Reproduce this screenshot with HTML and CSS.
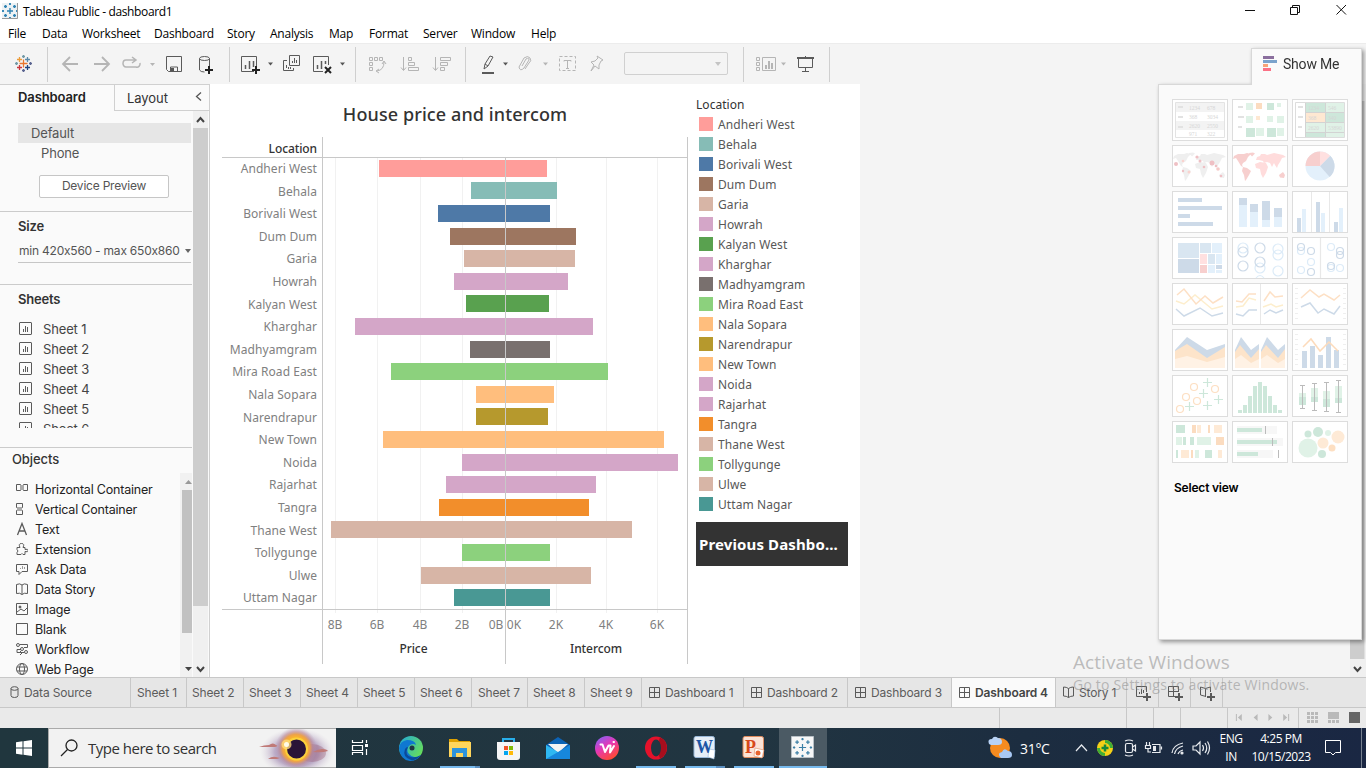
FILE: index.html
```html
<!DOCTYPE html>
<html lang="en">
<head>
<meta charset="utf-8">
<title>Tableau Public - dashboard1</title>
<link rel="stylesheet" href="styles.css">
</head>
<body>
<svg width="0" height="0" class="defs">
  <defs>
    <g id="plus9"><path d="M-4 0H4M0-4V4" stroke-width="2"/></g>
    <g id="sheet"><rect x=".5" y=".5" width="12" height="12" rx=".5"/><path d="M4.5 10V7M6.500 10V4M8.500 10V5"/></g>
    <g id="dash"><path d="M.5.5h10v10H.5zM5.5.5v10M.5 5.500h10"/></g>
    <g id="book"><path d="M.5 1Q3.500 1 5.500 2.500Q7.500 1 10.500 1V10Q7.500 10 5.500 11.500Q3.500 10 .5 10zM5.500 2.500V11.500"/></g>
    <g id="crosses"><path d="M-3 0H3M0-3V3"/><path d="M-6-4.500h3M-4.500-6v3M3-4.500h3M4.500-6v3M-6 4.500h3M-4.500 3v3M3 4.500h3M4.500 3v3M-1-7h2M0-8v2M-1 7h2M0 6v2M-8 0h2M-7-1v2M6 0h2M7-1v2"/></g>
  </defs>
</svg>
<div class="app">
  <header class="titlebar">
    <svg width="16" height="16" viewBox="-8 -8 16 16"><rect x="-8" y="-8" width="16" height="16" fill="#eef2f4"/><use href="#crosses" stroke="#2f83b3" fill="none" stroke-width="1.400"/><path d="M-8 7.500H7.500V-8" stroke="#999" fill="none"/></svg>
    <span class="title">Tableau Public - dashboard1</span>
    <svg class="winctl" width="126" height="22" viewBox="1240 0 126 22" fill="none" stroke="#111"><path d="M1245 10.500h10"/><path d="M1290.500 7.500h7v7h-7zM1292.500 7V5.500h7v7H1298"/><path d="M1336.500 5l9.500 9.500M1346 5l-9.500 9.500"/></svg>
  </header>
  <nav class="menubar"><span>File</span><span>Data</span><span>Worksheet</span><span>Dashboard</span><span>Story</span><span>Analysis</span><span>Map</span><span>Format</span><span>Server</span><span>Window</span><span>Help</span></nav>

  <div class="toolbar">
    <svg class="tool" width="47" height="41" viewBox="0 43 47 41" fill="none" stroke-width="1.300"><path stroke="#e8762c" d="M19.500 63.500h8M23.500 59.500v8"/><path stroke="#eb9c3a" d="M17 59.500h5M19.500 57v5"/><path stroke="#5c8aa8" d="M25 59.500h5M27.500 57v5"/><path stroke="#c8373f" d="M17 67.500h5M19.500 65v5"/><path stroke="#1f447e" d="M25 67.500h5M27.500 65v5"/><path stroke="#7199a6" d="M15 63.500h3M16.500 62v3M22 56.500h3M23.500 55v3"/><path stroke="#5b6591" d="M29 63.500h3M30.500 62v3M22 70.500h3M23.500 69v3"/></svg>
    <i class="sep"></i>
    <svg class="tool dim" width="181" height="41" viewBox="48 43 181 41"><path stroke-width="1.800" d="M78 64H63M70 57l-7 7 7 7M94 64h15M102 57l7 7-7 7"/><path stroke-width="1.500" d="M136 60h-10a3 3.500 0 0 0 0 7h10a3 3.500 0 0 0 4-4M132 57l4 3-4 3"/><path class="caret" d="M150 63h5l-2.500 3z"/><g class="dark"><path d="M166.500 56.500h15v15h-13l-2-2zM170.500 71.500v-4.500h7v4.500"/><path fill="#555" stroke="none" d="M171 68h3v3h-3z"/><ellipse cx="204.500" cy="58.500" rx="5" ry="2"/><path d="M199.500 58.500V70q1 2 5 2M209.500 58.500V66"/></g><use href="#plus9" x="209" y="70" stroke="#222"/></svg>
    <i class="sep"></i>
    <svg class="tool dark" width="125" height="41" viewBox="230 43 125 41"><path d="M254 71.500H241.500v-15h15V66"/><path stroke-width="1.500" d="M245.500 69v-4M249.500 69v-8M253.500 67v-6"/><use href="#plus9" x="256" y="70" stroke="#222"/><path class="caret" d="M268 62.500h5l-2.500 3z"/><path d="M289.500 55.500h10v10h-10zM292.500 63v-2M294.500 63v-5M296.500 63v-3M287 60.500h-3.500v10h10V68M286.500 68v-3M288.500 69v-2M290.500 69v-2"/><path d="M323 71.500H313.500v-15h15V65"/><path stroke-width="1.500" d="M317.500 69v-4M321.500 69v-8M325.500 64v-3"/><path stroke="#222" stroke-width="2" d="M325 67l6 6M331 67l-6 6"/><path class="caret" d="M340 62.500h5l-2.500 3z"/></svg>
    <i class="sep"></i>
    <svg class="tool dim" width="109" height="41" viewBox="356 43 109 41"><path d="M369.500 57.500h3v3h-3zM374.500 57.500h3v3h-3zM379.500 57.500h3v3h-3zM369.500 62.500h3v3h-3zM369.500 67.500h3v3h-3zM377 71q7-1 7-9M382 64l2-3 2 3M379 69l-3 2 3 2"/><path d="M403.500 57v13M401 67.500l2.500 3 2.500-3M408.500 57.500h3v3h-3zM408.500 62.500h6v3h-6zM408.500 67.500h10v3h-10zM435.500 57v13M433 67.500l2.500 3 2.500-3M440.500 57.500h10v3h-10zM440.500 62.500h7v3h-7zM440.500 67.500h4v3h-4z"/></svg>
    <i class="sep"></i>
    <svg class="tool dim" width="152" height="41" viewBox="466 43 152 41"><g class="dark"><path d="M484 69l1-5 5-8 3 1-5 9-4 3zM485 64l3 2"/><path stroke-width="2" d="M482 73h12"/><path class="caret" d="M503 62.500h5l-2.500 3z"/></g><path d="M522 66l4-7q3-2 3 1l-5 8q-4 4-5-1l5-9q4-3 6 0t-1 5l-4 6"/><path class="caret" d="M543 62.500h5l-2.500 3z"/><path stroke-dasharray="3 2" d="M559.500 56.500h16v14h-16z"/><path d="M564 61.500V60.500h7v1M567.500 60.500v8M566 68.500h3"/><path d="M597 56l6 4-2 1-2 4 0 4-4-3-4 5 3-6-3-3 4-1 3-3z"/></svg>
    <div class="fitbox"><i></i></div>
    <i class="sep s2"></i>
    <svg class="tool dim" width="85" height="41" viewBox="744 43 85 41"><path d="M756.500 57.500h3v3h-3zM756.500 62.500h3v3h-3zM756.500 67.500h3v3h-3zM762.500 57.500h13v13h-13z"/><path stroke-width="2" d="M766 69v-4M769 69v-8M772 69v-6"/><path class="caret" d="M781 62.500h5l-2.500 3z"/><g class="dark"><path stroke-width="2" d="M797 58h17"/><path d="M805.500 56v2M798.500 58v9.500h14V58M805.500 68v4M802 71.500h7"/></g></svg>
    <i class="sep"></i>
  </div>

  <main class="work">
    <aside class="side">
      <div class="sidetabs"><b>Dashboard</b><span>Layout<svg width="8" height="11" viewBox="0 0 8 11" fill="none" stroke="#555" stroke-width="1.300"><path d="M6 .5L1.500 4.500 6 8.500"/></svg></span></div>
      <div class="sidebody">
        <div class="panes">
          <section class="devices"><div class="default">Default</div><div class="phone">Phone</div><div class="preview">Device Preview</div></section>
          <section class="size"><h3>Size</h3><div class="drop">min 420x560 - max 650x860<i></i></div></section>
          <section class="sheets"><h3>Sheets</h3>
            <ul>
              <li><svg class="ic" width="13" height="13"><use href="#sheet"/></svg>Sheet 1</li>
              <li><svg class="ic" width="13" height="13"><use href="#sheet"/></svg>Sheet 2</li>
              <li><svg class="ic" width="13" height="13"><use href="#sheet"/></svg>Sheet 3</li>
              <li><svg class="ic" width="13" height="13"><use href="#sheet"/></svg>Sheet 4</li>
              <li><svg class="ic" width="13" height="13"><use href="#sheet"/></svg>Sheet 5</li>
              <li><svg class="ic" width="13" height="13"><use href="#sheet"/></svg>Sheet 6</li>
            </ul>
          </section>
          <section class="objects">
            <div class="objmain"><h3>Objects</h3>
            <ul>
              <li><svg class="ic" width="12" height="14"><path d="M.5 2.500h4v6h-4zM7.500 2.500h4v6h-4z"/><path fill="#aaa" stroke="none" d="M4 3h4v5H4z"/></svg>Horizontal Container</li>
              <li><svg class="ic" width="12" height="14"><path d="M.5 1.500h6v4h-6zM.5 8.500h6v4h-6z"/><path fill="#aaa" stroke="none" d="M1 5h5v4H1z"/></svg>Vertical Container</li>
              <li><svg class="ic" width="12" height="14"><path stroke-width="1.300" d="M1.500 13L6 1.500 10.500 13M3 9h6"/></svg>Text</li>
              <li><svg class="ic" width="12" height="14"><path d="M1 5.500h3q-2-4 1.500-4t1.500 4h2v2q3-1 3 1t-3 1v3H7q-1-2-2 0H1v-2q2-1.500 0-3z"/></svg>Extension</li>
              <li><svg class="ic" width="12" height="14"><path d="M.5 2.500h11v7H6l-3 3v-3H.5z"/><path stroke="#999" d="M4.500 7V6M6.500 7V4M8.500 7V5"/></svg>Ask Data</li>
              <li><svg class="ic" width="12" height="14"><path d="M.5 2.500Q4 1 6 3q2-2 5.500-.5v9Q8 10.500 6 12.500 4 10.500.5 11.500zM6 3v9.500"/></svg>Data Story</li>
              <li><svg class="ic" width="12" height="14"><path d="M.5 1.500h11v11H.5zM1 10l4-3 3 2 3-3"/><circle cx="4" cy="5" r="1" fill="#555"/></svg>Image</li>
              <li><svg class="ic" width="12" height="14"><path d="M.5 1.500h11v11H.5z"/></svg>Blank</li>
              <li><svg class="ic" width="12" height="14"><circle cx="2" cy="3" r="1.500"/><circle cx="6" cy="7" r="1.500"/><circle cx="10" cy="10" r="1.500"/><path d="M4 2.500h7.500v3H8M5 7.500H1v3h7M4 9l2 2-2 2"/></svg>Workflow</li>
              <li><svg class="ic" width="12" height="14"><circle cx="6" cy="7" r="5.500"/><ellipse cx="6" cy="7" rx="2.500" ry="5.500"/><path d="M1 5h10M1 9h10"/></svg>Web Page</li>
            </ul></div>
            <svg class="objscroll" width="12" height="204" viewBox="180 473 12 204"><path fill="#f1f1f1" d="M180 473h12v204h-12z"/><path fill="#c1c1c1" d="M182 490h10v143h-10z"/><path fill="#999" d="M185 484h7l-3.500-4z"/><path fill="#444" d="M185 667h7l-3.500 4z"/></svg>
          </section>
        </div>
        <svg width="15" height="566" viewBox="193 111 15 566"><path fill="#f0f0f0" d="M193 111h15v566h-15z"/><path fill="#cdcdcd" d="M193 128h15v478h-15z"/><path fill="none" stroke="#444" stroke-width="2" d="M197 122l3.500-4 3.500 4M197 667l3.500 4 3.500-4"/></svg>
      </div>
    </aside>

    <div class="canvas">
      <div class="viz">
        <h1>House price and intercom</h1>
        <svg class="chart" width="466" height="527" viewBox="222 137 466 527">
          <path class="grid" d="M335.500 158v455M377.500 158v455M420.500 158v455M462.500 158v455M556.500 158v455M606.500 158v455M657.500 158v455"/>
          <g class="bars">
            <rect x="379" y="160" width="168" fill="#ff9d9a"/><rect x="471" y="182" width="86" fill="#86bcb6"/><rect x="438" y="205" width="112" fill="#4e79a7"/><rect x="450" y="228" width="126" fill="#9d7660"/><rect x="464" y="250" width="111" fill="#d7b5a6"/><rect x="454" y="273" width="114" fill="#d4a6c8"/><rect x="466" y="295" width="83" fill="#59a14f"/><rect x="355" y="318" width="238" fill="#d4a6c8"/><rect x="470" y="341" width="80" fill="#79706e"/><rect x="391" y="363" width="217" fill="#8cd17d"/><rect x="476" y="386" width="78" fill="#ffbe7d"/><rect x="476" y="408" width="72" fill="#b6992d"/><rect x="383" y="431" width="281" fill="#ffbe7d"/><rect x="462" y="454" width="216" fill="#d4a6c8"/><rect x="446" y="476" width="150" fill="#d4a6c8"/><rect x="439" y="499" width="150" fill="#f28e2b"/><rect x="331" y="521" width="301" fill="#d7b5a6"/><rect x="462" y="544" width="88" fill="#8cd17d"/><rect x="421" y="567" width="170" fill="#d7b5a6"/><rect x="454" y="589" width="96" fill="#499894"/>
          </g>
          <path class="rule" d="M322.500 137v527M687.500 137v527M505.500 158v506M222 157.500h466M222 609.500h466"/>
          <g class="names">
            <text class="head" x="317" y="153">Location</text>
            <text x="317" y="173">Andheri West</text><text x="317" y="196">Behala</text><text x="317" y="218">Borivali West</text><text x="317" y="241">Dum Dum</text><text x="317" y="263">Garia</text><text x="317" y="286">Howrah</text><text x="317" y="309">Kalyan West</text><text x="317" y="331">Kharghar</text><text x="317" y="354">Madhyamgram</text><text x="317" y="376">Mira Road East</text><text x="317" y="399">Nala Sopara</text><text x="317" y="422">Narendrapur</text><text x="317" y="444">New Town</text><text x="317" y="467">Noida</text><text x="317" y="489">Rajarhat</text><text x="317" y="512">Tangra</text><text x="317" y="535">Thane West</text><text x="317" y="557">Tollygunge</text><text x="317" y="580">Ulwe</text><text x="317" y="602">Uttam Nagar</text>
          </g>
          <g class="ticks"><text x="335" y="629">8B</text><text x="377" y="629">6B</text><text x="420" y="629">4B</text><text x="462" y="629">2B</text><text x="496" y="629">0B</text><text x="514" y="629">0K</text><text x="556" y="629">2K</text><text x="606" y="629">4K</text><text x="657" y="629">6K</text><text class="head" x="413.500" y="653">Price</text><text class="head" x="596" y="653">Intercom</text></g>
        </svg>
      </div>
      <div class="legend">
        <h2>Location</h2>
        <ul>
          <li><i class="c-pink"></i>Andheri West</li><li><i class="c-aqua"></i>Behala</li><li><i class="c-blue"></i>Borivali West</li><li><i class="c-brown"></i>Dum Dum</li><li><i class="c-tan"></i>Garia</li><li><i class="c-mauve"></i>Howrah</li><li><i class="c-green"></i>Kalyan West</li><li><i class="c-mauve"></i>Kharghar</li><li><i class="c-gray"></i>Madhyamgram</li><li><i class="c-lime"></i>Mira Road East</li><li><i class="c-peach"></i>Nala Sopara</li><li><i class="c-olive"></i>Narendrapur</li><li><i class="c-peach"></i>New Town</li><li><i class="c-mauve"></i>Noida</li><li><i class="c-mauve"></i>Rajarhat</li><li><i class="c-orange"></i>Tangra</li><li><i class="c-tan"></i>Thane West</li><li><i class="c-lime"></i>Tollygunge</li><li><i class="c-tan"></i>Ulwe</li><li><i class="c-teal"></i>Uttam Nagar</li>
        </ul>
        <div class="prev">Previous Dashbo...</div>
      </div>
    </div>
    <svg class="vscroll" width="16" height="593" viewBox="1350 84 16 593"><path fill="#f0f0f0" d="M1350 84h16v593h-16z"/><path fill="#cdcdcd" d="M1350 101h14.500v558h-14.500z"/><path fill="none" stroke="#444" stroke-width="2" d="M1354 667l3.500 4 3.500-4"/></svg>
  </main>

  <footer class="tabs">
    <span class="t-src"><svg class="ic" width="9" height="12"><ellipse cx="4.500" cy="2.500" rx="3.500" ry="1.800"/><path d="M1 2.500v7q0 2 3.500 2t3.500-2v-7"/></svg>Data Source</span>
    <span class="t-sh n">Sheet 1</span><span class="t-sh">Sheet 2</span><span class="t-sh">Sheet 3</span><span class="t-sh">Sheet 4</span><span class="t-sh">Sheet 5</span><span class="t-sh">Sheet 6</span><span class="t-sh n">Sheet 7</span><span class="t-sh">Sheet 8</span><span class="t-sh">Sheet 9</span>
    <span class="t-da n"><svg class="ic" width="11" height="11"><use href="#dash"/></svg>Dashboard 1</span><span class="t-da"><svg class="ic" width="11" height="11"><use href="#dash"/></svg>Dashboard 2</span><span class="t-da"><svg class="ic" width="11" height="11"><use href="#dash"/></svg>Dashboard 3</span><span class="t-da on"><svg class="ic" width="11" height="11"><use href="#dash"/></svg>Dashboard 4</span>
    <span class="t-st"><svg class="ic" width="11" height="12"><use href="#book"/></svg>Story 1</span>
    <span class="t-new"><svg class="ic" width="16" height="16"><path d="M7 10.500H.5v-10h10V6M3.500 8V6M5.500 8V3M7.500 7V4"/><use href="#plus9" x="11" y="11"/></svg></span>
    <span class="t-new"><svg class="ic" width="16" height="16"><path d="M7 10.500H.5v-10h10V6M5.500.5v10M.5 5.500h10"/><use href="#plus9" x="11" y="11"/></svg></span>
    <span class="t-new"><svg class="ic" width="16" height="16"><path d="M6 10.500L.5 9V1l5 1.500 5-1.500V6M5.500 2.500v8"/><use href="#plus9" x="11" y="11"/></svg></span>
  </footer>
  <div class="status">
    <i></i><i></i><i></i><i></i>
    <svg width="71" height="20" viewBox="1228 708 71 20" fill="#b9b9b9"><path d="M1236 714h1v7h-1zM1242 714v7l-4-3.500zM1258 714v7l-4-3.500zM1269 714v7l4-3.500zM1284 714v7l4-3.500zM1289 714h1v7h-1z"/></svg><i class="last"></i>
    <svg width="67" height="20" viewBox="1299 708 67 20" fill="#b9b9b9"><path d="M1307 712h3v3h-3zM1311 712h3v3h-3zM1315 712h3v3h-3zM1307 716h3v3h-3zM1311 716h3v3h-3zM1315 716h3v3h-3zM1307 720h3v3h-3zM1311 720h3v3h-3zM1315 720h3v3h-3zM1328 712h11v7h-11zM1328 720h3v3h-3zM1332 720h3v3h-3zM1336 720h3v3h-3z"/><path fill="#666" d="M1349 712h11v11h-11z"/></svg>
  </div>

  <div class="taskbar">
    <svg width="48" height="40" viewBox="0 728 48 40" fill="#fff"><path d="M16 742.300l6.500-1v6.200H16zM23.500 741.200l8.500-1.200v7.500h-8.500zM16 748.500h6.500v6.200l-6.500-1zM23.500 748.500H32v7.500l-8.500-1.200z"/></svg>
    <div class="search"><svg width="40" height="40" viewBox="48 728 40 40" fill="none" stroke="#222" stroke-width="1.300"><circle cx="70.500" cy="745.500" r="5.500"/><path d="M66.500 749.500L60 756"/></svg><span>Type here to search</span>
      <svg class="eclipse" width="78" height="38" viewBox="258 729 78 38"><defs><radialGradient id="halo"><stop offset=".5" stop-color="#fbb52b"/><stop offset=".65" stop-color="#eda24a"/><stop offset=".8" stop-color="#c08c96" stop-opacity=".6"/><stop offset="1" stop-color="#b9a4c0" stop-opacity="0"/></radialGradient><radialGradient id="mist"><stop offset="0" stop-color="#7d5a92"/><stop offset=".6" stop-color="#a993b8" stop-opacity=".75"/><stop offset="1" stop-color="#d9d0dd" stop-opacity="0"/></radialGradient></defs><ellipse cx="297" cy="752" rx="37" ry="24" fill="url(#mist)"/><ellipse cx="312" cy="753" rx="14" ry="9" fill="#8f4661" opacity=".3"/><circle cx="296" cy="748" r="21" fill="url(#halo)"/><circle cx="296.500" cy="749" r="10.500" fill="#2a1437" stroke="#fbd13c" stroke-width="2"/><circle cx="286.500" cy="744.500" r="5" fill="#ffd97a" opacity=".8"/><circle cx="286.500" cy="744.500" r="2.500" fill="#fffbe8"/><path fill="#c07a78" d="M259 747q5-2 10-2 4-3 7 0 3 1-1 2zM268 759q4-3 8-2l4 1-3 1zM313 752q5-3 9-3 5 0 6 2-6 2-15 1z"/></svg></div>
    <svg width="443" height="40" viewBox="335 728 443 40"><defs><linearGradient id="edg" x2="1" y2=".6"><stop stop-color="#20a8dd"/><stop offset="1" stop-color="#65dc5d"/></linearGradient><linearGradient id="wps" x2=".6" y2="1"><stop stop-color="#7468ff"/><stop offset=".5" stop-color="#e438b7"/><stop offset="1" stop-color="#ff4a35"/></linearGradient></defs>
      <path fill="none" stroke="#fff" stroke-width="1.200" d="M352.500 740v2.500h10V740M352.500 755v-2.500h10V755M352.500 745.500h10v5h-10zM366.500 740v3M366.500 749v6"/><path fill="#fff" d="M365 744h3v3h-3z"/>
      <circle cx="411" cy="748" r="12" fill="url(#edg)"/><path fill="#0f78d1" d="M399 748q1-7 8-8 8 0 9 5-3-2-6 0-5 4-1 9 5 6 12 1-4 6-11 6-10-1-11-13z"/><path fill="#0a4a9b" d="M408 747q-4 8 3 10 5 1 10-2-5 6-10 5-9-3-6-11 1-2 3-2z"/><circle cx="412" cy="748" r="2.500" fill="#203642"/>
      <path fill="#dfa100" d="M449 739h8l2 2h11v4h-21z"/><path fill="#ffd65c" d="M449 742h22v15h-22z"/><path fill="#2e94db" d="M452 748h15v9h-4v-4h-7v4h-4z"/>
      <path fill="none" stroke="#28aeea" stroke-width="2" d="M503 743v-4h11v4"/><path fill="#f5f5f5" d="M497 742h23v15q0 3-3 3h-17q-3 0-3-3z"/><path fill="#f35325" d="M504 746h4v4h-4z"/><path fill="#81bc06" d="M509 746h4v4h-4z"/><path fill="#05a6f0" d="M504 751h4v4h-4z"/><path fill="#ffba08" d="M509 751h4v4h-4z"/>
      <path fill="#0c63b5" d="M546 745l12-8 12 8v6h-24z"/><path fill="#f3f3f3" d="M548 744h20l-10 9z"/><path fill="#2fb8f2" d="M546 745l12 7 12 7H546z"/><path fill="#1787dc" d="M570 745v14H546l12-7z"/>
      <circle cx="607" cy="748" r="12" fill="url(#wps)"/><path fill="none" stroke="#fff" stroke-width="2" stroke-linejoin="round" stroke-linecap="round" d="M600.500 744.500h2l2.500 7.500 3.500-6.500h2l-.5 7 4-6.500M613.500 742h.5"/>
      <ellipse cx="656" cy="748" rx="11" ry="11.500" fill="#e5122b"/><path fill="#a60e1d" d="M660 737.500a11.500 11.500 0 0 1 0 21q-5-10 0-21z"/><ellipse cx="656" cy="748" rx="5" ry="8.500" fill="#203642"/>
      <rect x="694" y="736.500" width="20.500" height="21" rx="2" fill="#e6eef7" stroke="#9ab8d8"/><path fill="#fff" stroke="#9ab8d8" stroke-width=".6" d="M709 749l6 1-1 9-6-2z"/><text x="696" y="753" class="office" fill="#1d55a5" textLength="17" lengthAdjust="spacingAndGlyphs">W</text>
      <rect x="743" y="736.500" width="20.500" height="21" rx="2" fill="#fbe3d6" stroke="#e08a5c"/><text x="745" y="753" class="office" fill="#d8491a">P</text><path fill="#fff" stroke="#dd8a5f" stroke-width=".6" d="M755 748l9 2-2 8-8-2z"/><circle cx="758" cy="753" r="2.500" fill="#e8632d"/>
      <path fill="#76b9ed" d="M440 766h35v2h-35zM636 766h40v2h-40zM685 766h31v2h-31zM734 766h40v2h-40z"/><path fill="#5b8fc0" d="M475 766h5v2h-5zM716 766h9v2h-9z"/></svg>
    <div class="active"><svg width="48" height="40" viewBox="779 728 48 40"><path fill="#f7f7f7" stroke="#b8c0c6" d="M791.500 736.500h22v21h-22z"/><use href="#crosses" transform="translate(802.500 747.500) scale(1.200)" stroke="#3c7fa6" fill="none"/></svg></div>
    <div class="tray">
      <svg width="32" height="40" viewBox="984 728 32 40"><circle cx="1000" cy="748" r="10" fill="#f58b1f"/><path fill="#b8d2f5" d="M989 744q-2-5 3-5 2-4 6-1 4 0 4 4 0 3-4 3h-7z"/><path fill="#a8c8f3" d="M1000 757q-3-4 2-5 2-5 6-1 4 0 4 4 0 3-4 3h-7z"/></svg>
      <span class="temp">31°C</span>
      <svg width="146" height="40" viewBox="1070 728 146 40" fill="none" stroke="#e8ebef" stroke-width="1.200"><path d="M1076 751l5.500-6 5.500 6"/><circle cx="1105" cy="748" r="8" fill="#f5d017" stroke="none"/><path d="M1105 740a8 8 0 0 1 8 8h-3a5 5 0 0 0-5-5zM1105 756a8 8 0 0 1-8-8h3a5 5 0 0 0 5 5z" fill="#3fae35" stroke="none"/><path stroke="#16883a" stroke-width="2.500" d="M1101.500 748h7M1105 744.500v7"/><rect x="1125.500" y="743.500" width="7" height="9" rx="1.500"/><path d="M1132.500 747l3-2v6l-3-2M1125 741q4-2 8 0M1125 755q4 2 8 0"/><path d="M1152 744.500h8v8h-8M1161.500 746.500v3M1146.500 742v3M1149.500 742v3M1145.500 745.500h5v3h-5zM1148 749v3h3"/><path fill="#e8ebef" stroke="none" d="M1153 746h3v5h-3z"/><path d="M1172 753q1-8 11-10M1174.500 754q1-6 8.500-8M1178 754q1-3 5-4"/><circle cx="1182" cy="753" r="1" fill="#fff"/><path d="M1193 746h3l4-4v12l-4-4h-3zM1202.500 745q2 3 0 6M1205 743q3.500 5 0 10M1207.500 741.500q4 6.500 0 13"/></svg>
      <div class="lang">ENG<br>IN</div><div class="clock">4:25 PM<br>10/15/2023</div>
      <svg width="53" height="40" viewBox="1313 728 53 40" fill="none" stroke="#fff"><path d="M1325.500 740.500h15v12h-5l-2.500 2.500-2.500-2.500h-5z"/><path stroke="#77818f" d="M1361.500 728v40"/></svg>
    </div>
  </div>

  <div class="showme">
    <div class="smtab"><svg width="14" height="15"><path fill="#8b6f9e" d="M0 0h11v3H0z"/><path fill="#7ba3cc" d="M0 4h14v3H0z"/><path fill="#f7a377" d="M0 8h5v3H0z"/><path fill="#fb7185" d="M0 12h8v3H0z"/></svg>Show Me</div>
    <div class="smbody">
      <div class="thumbs">
        <svg viewBox="0 0 56 42"><path fill="none" stroke="#e3e3e3" d="M3.500 3.500h49v35h-49z"/><path fill="#f3f3f3" d="M4 4h48v9H4zM4 22h48v9H4z"/><path stroke="#e2e2e2" stroke-width="2" d="M6 8h5M6 18h5M6 28h5"/><g class="num"><text x="17" y="11">1234</text><text x="35" y="11">678</text><text x="17" y="20">368</text><text x="35" y="20">3034</text><text x="17" y="29">2620</text><text x="35" y="29">2550</text><text x="17" y="37">971</text><text x="35" y="37">322</text></g></svg>
        <svg viewBox="0 0 56 42"><path stroke="#e2e2e2" stroke-width="2" d="M6 8h5M6 18h6M6 28h4"/><path fill="#cde7da" d="M35 4h7v7h-7zM14 29h9v9h-9zM35 29h9v9h-9z"/><path fill="#e0f2e7" d="M14 4h7v7h-7zM45 4h4v4h-4zM14 17h7v7h-7zM35 17h6v6h-6zM45 17h7v7h-7zM24 29h8v8h-8zM45 29h7v8h-7z"/><path fill="#fbdcc0" d="M24 4h6v6h-6z"/><path fill="#fee8d2" d="M24 17h4v4h-4z"/></svg>
        <svg viewBox="0 0 56 42"><path fill="none" stroke="#ddd" d="M3.500 3.500h49v35h-49z"/><path fill="#cde7da" d="M14 4h19v9H14zM33 13h19v10H33zM14 34h19v4H14z"/><path fill="#e0f2e7" d="M33 4h19v9H33zM14 23h38v10H14zM33 34h19v4H33z"/><path fill="#fee8d2" d="M14 13h19v10H14z"/><path fill="none" stroke="#d3d3d3" d="M13.500 4v34M33.500 4v34M14 13.500h38M14 23.500h38M14 33.500h38"/><path stroke="#e2e2e2" stroke-width="2" d="M6 8h5M6 18h5M6 28h4"/><g class="num"><text x="16" y="11">1234</text><text x="36" y="11">546</text><text x="16" y="21">368</text><text x="36" y="21">340</text><text x="16" y="31">2620</text><text x="36" y="31">53890</text></g></svg>
        <svg viewBox="0 0 56 42"><path fill="#efefef" d="M2 11l4-2 6 0 3-1 4 1-3 3-2 4-3 2-1 2 1 2-2-1-3-5-2-3-3 1zM17 8l4-.5 2 1-3 3zM11 22l4 1 4 3-2 4-3 5-1 1-1-6-2-4zM24 15l1-3 3-1 1-2 4 0 2 1 7-2 9 2 3 2-4 1-2 4-2 3-1 3-2-3-1-2-2 4-2-4-3-1-3 1-1-2-4-1zM23 19l5-2 6 1 2 4-2 6-3 5-2-4-1-5-4-1zM47 30l4-3 2 3-1 3-4-.5z"/><g fill="#efc0c4"><circle cx="4" cy="19" r="2"/><circle cx="11" cy="16" r="1.300" fill="#fad3cf"/><circle cx="25" cy="12" r="1.600"/><circle cx="28" cy="16" r="1.500"/><circle cx="40" cy="18" r="2.500"/><circle cx="44" cy="21" r="1.300"/><circle cx="46" cy="24" r="1.800" fill="#f5cac8"/><circle cx="11" cy="26" r="1.200"/><circle cx="32" cy="22" r="1.300"/><circle cx="49" cy="31" r="1.300"/><circle cx="17" cy="27" r="1.500" fill="#fad3cf"/></g></svg>
        <svg viewBox="0 0 56 42"><path fill="#f7cfce" d="M2 11l4-2 6 0 3-1 4 1-3 3-2 4-3 2-1 2 1 2-2-1-3-5-2-3-3 1zM17 8l4-.5 2 1-3 3zM11 22l4 1 4 3-2 4-3 5-1 1-1-6-2-4zM47 30l4-3 2 3-1 3-4-.5z"/><path fill="#ffdcdc" d="M24 15l1-3 3-1 1-2 4 0 2 1 7-2 9 2 3 2-4 1-2 4-2 3-1 3-2-3-1-2-2 4-2-4-3-1-3 1-1-2-4-1zM23 19l5-2 6 1 2 4-2 6-3 5-2-4-1-5-4-1z"/></svg>
        <svg viewBox="0 0 56 42"><circle cx="28" cy="21" r="14.500" fill="#e3f0fb"/><path fill="#cddae8" d="M28 21L38.200 10.800a14.500 14.500 0 0 1-.5 21.200z"/><path fill="#ffe0e0" d="M28 21V6.500a14.500 14.500 0 0 1 10.200 4.300z"/><path fill="#f7cfce" d="M28 21H13.500A14.500 14.500 0 0 1 28 6.500z"/></svg>
        <svg viewBox="0 0 56 42"><path fill="#cddae8" d="M6 7h24v4H6zM6 15h44v4H6zM6 23h12v4H6zM6 31h35v4H6z"/></svg>
        <svg viewBox="0 0 56 42"><path fill="#e3f0fb" d="M7 14h8v22H7zM18 21h8v15h-8zM30 29h8v7h-8zM42 26h8v10h-8z"/><path fill="#cddae8" d="M7 7h8v7H7zM18 13h8v8h-8zM30 10h8v19h-8zM42 17h8v9h-8z"/></svg>
        <svg viewBox="0 0 56 42"><path stroke="#e8e8e8" d="M19.500 1v40M37.500 1v40"/><path fill="#cddae8" d="M5 27h4v14H5zM24 11h4v30h-4zM42 31h4v10h-4z"/><path fill="#e3f0fb" d="M10 18h4v23h-4zM29 22h4v19h-4zM47 17h4v24h-4z"/></svg>
        <svg viewBox="0 0 56 42"><path fill="#d9e6f1" d="M6 6h21v15H6zM28 6h11v10H28zM36 17h7v10h-7z"/><path fill="#e3f0fb" d="M40 6h10v10H40zM44 17h6v10h-6zM36 28h7v8h-7zM44 33h6v3h-6z"/><path fill="#cddae8" d="M6 22h21v14H6zM44 28h6v4h-6z"/><path fill="#ffe0e0" d="M28 17h7v10h-7z"/><path fill="#f7cfce" d="M28 28h7v8h-7z"/></svg>
        <svg viewBox="0 0 56 42" fill="none" stroke="#cddae8" stroke-width="1.200"><g stroke="#dcebf8"><circle cx="11" cy="11" r="5"/><circle cx="46" cy="12" r="5"/><circle cx="46" cy="18" r="5"/><circle cx="28" cy="31" r="5"/><circle cx="46" cy="34" r="5"/><path d="M24 41q4-5 8 0"/></g><circle cx="11" cy="15" r="5"/><circle cx="11" cy="29" r="5"/><circle cx="28" cy="11" r="5"/><circle cx="28" cy="25" r="5"/></svg>
        <svg viewBox="0 0 56 42" fill="none" stroke="#cddae8" stroke-width="1.200"><path stroke="#e8e8e8" d="M28.500 1v40"/><g stroke="#dcebf8"><circle cx="9" cy="14" r="3.500"/><circle cx="19" cy="25" r="3.500"/><circle cx="9" cy="33" r="3.500"/><circle cx="39" cy="10" r="3.500"/><circle cx="48" cy="31" r="3.500"/><circle cx="39" cy="31" r="3.500"/></g><circle cx="9" cy="10" r="3.500"/><circle cx="19" cy="14" r="3.500"/><circle cx="19" cy="35" r="3.500"/><circle cx="48" cy="14" r="3.500"/><circle cx="48" cy="18" r="3.500"/><circle cx="39" cy="29" r="3.500"/></svg>
        <svg viewBox="0 0 56 42" fill="none" stroke-width="1.500"><path stroke="#fdeecd" d="M4 18l8 3 11-9 17 14 11-3"/><path stroke="#fde0c5" d="M5 12l7-6 12 15 9-8 8 7 10-6"/><path stroke="#cddae8" d="M4 26l8 7 16-8 12 8 11-3"/></svg>
        <svg viewBox="0 0 56 42" fill="none" stroke-width="1.500"><path stroke="#e8e8e8" stroke-width="1" d="M28.500 1v40"/><path stroke="#fdeecd" d="M4 24l7-1 6-8 7 2M31 24l8-3 5 3 7-2"/><path stroke="#fde0c5" d="M4 18l6 1 7-8h7M32 18l6-9 5 5 8-1"/><path stroke="#cddae8" d="M4 31l7 2 6-6 8 0M32 31l6-4 6 3 7-3"/></svg>
        <svg viewBox="0 0 56 42" fill="none" stroke-width="1.500"><path stroke="#fde0c5" d="M9 15l9-8 9 7 5-3 10 6 6-5"/><path stroke="#cddae8" d="M9 24l9-4 8 10 6-4 10 5 6-8"/><path stroke="#efefef" stroke-width="3" stroke-dasharray="1 4" d="M52.500 5v32M4.500 5v32"/></svg>
        <svg viewBox="0 0 56 42"><path fill="#cddae8" d="M3 21l12-13 20 13 18-6v24H3z"/><path fill="#fde4ca" d="M3 22l12-7 20 14 18-11v21H3z"/><path fill="#fff2e5" d="M3 30l12-3 20 6 18-5v11H3z"/></svg>
        <svg viewBox="0 0 56 42"><path fill="#cddae8" d="M3 21L9 8l10 13 8-6v24H3zM29 21l6-13 11 13 7-6v24H29z"/><path fill="#fde4ca" d="M3 23l5-7 11 13 8-9v19H3zM29 23l5-7 12 13 7-9v19H29z"/><path fill="#fff2e5" d="M3 30l6-4 10 8 8-4v9H3zM29 30l6-4 11 8 7-4v9H29z"/></svg>
        <svg viewBox="0 0 56 42" fill="none"><path fill="#cddae8" d="M10 22h5v17h-5zM18 17h5v22h-5zM26 26h5v13h-5zM34 8h5v31h-5zM42 21h5v18h-5z"/><path stroke="#fddbbb" stroke-width="1.500" d="M11 18l8-8 9 12 9-9 9 9"/><path stroke="#efefef" stroke-width="3" stroke-dasharray="1 4" d="M52.500 5v32M4.500 5v32"/></svg>
        <svg viewBox="0 0 56 42" fill="none" stroke="#fddfc2" stroke-width="1.200"><circle cx="8" cy="34" r="3.500"/><circle cx="14" cy="22" r="3.500"/><circle cx="22" cy="12" r="3.500"/><circle cx="25" cy="26" r="3.500"/><circle cx="43" cy="14" r="3.500"/><path stroke="#cde7da" d="M13 31.500h9M17.500 27v9M27 18.500h9M31.500 14v9M31 7.500h9M35.500 3v9M31 30.500h9M35.500 26v9M42 24.500h9M46.500 20v9"/></svg>
        <svg viewBox="0 0 56 42"><path fill="#cde7da" d="M6 35h4v3H6zM11 30h4v8h-4zM16 21h4v17h-4zM21 11h4v27h-4zM26 7h4v31h-4zM31 11h4v27h-4zM36 21h4v17h-4zM41 30h4v8h-4zM46 35h4v3h-4z"/></svg>
        <svg viewBox="0 0 56 42"><path fill="#e0f2e7" d="M7 18h7v4H7zM19 13h7v9h-7zM31 16h7v8h-7zM43 11h7v12h-7z"/><path fill="#cde7da" d="M7 22h7v8H7zM19 22h7v5h-7zM31 24h7v8h-7zM43 23h7v5h-7z"/><path stroke="#bbb" fill="none" d="M10.500 10v24M8 10.500h5M8 33.500h5M22.500 8v27M20 8.500h5M20 35.500h5M34.500 7v29M32 7.500h5M32 36.500h5M46.500 5v33M44 5.500h5M44 37.500h5"/></svg>
        <svg viewBox="0 0 56 42"><path fill="#cde7da" d="M4 4h9v8H4zM11 16h3v8h-3zM18 16h4v8h-4zM4 29h2v8H4zM33 29h7v8h-7z"/><path fill="#e0f2e7" d="M4 16h6v8H4zM25 16h14v8H25zM23 29h4v8h-4z"/><path fill="#fbdcc0" d="M20 4h4v8h-4zM36 4h2v8h-2zM44 16h8v8h-8zM19 29h2v8h-2z"/><path fill="#feead6" d="M25 4h4v8h-4zM42 4h8v8h-8zM9 29h8v8H9zM46 29h4v8h-4z"/></svg>
        <svg viewBox="0 0 56 42"><path fill="#f7f7f7" d="M5 5h40v8H5zM5 17h46v8H5zM5 29h36v8H5z"/><path fill="#cde7da" d="M5 7h25v4H5zM5 19h40v4H5zM5 31h21v4H5z"/><path stroke="#bbb" d="M33.500 5v8M40.500 17v8M46.500 29v8"/></svg>
        <svg viewBox="0 0 56 42" fill="#cde7da"><circle cx="16" cy="27" r="9.500" fill="#e0f2e7"/><circle cx="16" cy="13" r="3.500"/><circle cx="26" cy="11" r="5"/><circle cx="36" cy="12" r="3" fill="#e0f2e7"/><circle cx="30" cy="33" r="4"/><circle cx="31" cy="22" r="5.500" fill="#feead6"/><circle cx="46" cy="16" r="6.500" fill="#feead6"/><circle cx="40" cy="27" r="3.500" fill="#fddfc2"/></svg>
      </div>
      <b>Select view</b>
    </div>
  </div>
  <div class="watermark"><div>Activate Windows</div><p>Go to Settings to activate Windows.</p></div>
</div>
</body>
</html>
```
FILE: styles.css
```css
* { box-sizing: border-box; }
body { margin: 0; font-family: "Open Sans", "Noto Sans", sans-serif; font-size: 12px; color: #000; }
ul, h1, h2, h3, p { margin: 0; padding: 0; list-style: none; font-weight: normal; }
svg { display: block; flex: none; }
i { font-style: normal; flex: none; }
.defs { position: absolute; }
.app { position: relative; width: 1366px; height: 768px; overflow: hidden; display: flex; flex-direction: column; background: #fff; white-space: nowrap; }

.titlebar { height: 22px; padding-left: 2px; display: flex; align-items: center; }
.title { margin-left: 5px; letter-spacing: -.35px; flex: 1; }
.menubar { height: 21px; padding-left: 8px; line-height: 23px; letter-spacing: -.22px; display: grid; grid-template-columns: 34px 40px 72px 73px 43px 59px 40px 54px 48px 60px auto; }
.toolbar { height: 41px; background: #f4f4f4; border-top: 1px solid #ececec; display: flex; align-items: flex-start; }
.tool { margin-top: -1px; fill: none; }
.dim { stroke: #b5b5b5; }
.dark { stroke: #5a5a5a; }
.caret { stroke: none; fill: #b5b5b5; }
.dark .caret { fill: #555; }
.sep { width: 1px; height: 35px; margin-top: 3px; background: #cfcfcf; }
.fitbox { width: 104px; height: 23px; margin: 8px 0 0 6px; border: 1px solid #d0d0d0; border-radius: 2px; display: flex; justify-content: flex-end; align-items: center; padding-right: 6px; }
.fitbox i { border: 3.500px solid transparent; border-top: 4px solid #c4c4c4; border-bottom: 0; }
.s2 { margin-left: 15px; }

.work { height: 593px; display: flex; background: #f4f4f4; }
.side { width: 210px; height: 593px; background: #fafafa; border-right: 1px solid #d0d0d0; border-top: 1px solid #d0d0d0; font-family: Inter, Roboto, sans-serif; color: #333; display: flex; flex-direction: column; }
.sidetabs { height: 26px; display: flex; font-size: 13px; line-height: 24px; flex: none; }
.sidetabs b { width: 114px; padding-left: 18px; color: #222; font-weight: 600; letter-spacing: -.1px; }
.sidetabs span { width: 95px; padding-left: 12px; border-left: 1px solid #d0d0d0; border-bottom: 1px solid #d0d0d0; display: flex; justify-content: space-between; align-items: center; padding-right: 6px; letter-spacing: -.05px; }
.sidebody { display: flex; height: 566px; justify-content: space-between; padding-right: 1px; }
.panes { width: 192px; }
.panes section { border-bottom: 1px solid #cbcbcb; }
.panes h3 { font-size: 13px; font-weight: 600; line-height: 16px; letter-spacing: -.2px; }
.devices { height: 101px; padding: 12px 1px 0 18px; font-size: 13px; color: #555; }
.default { background: #e6e6e6; height: 20px; line-height: 20px; padding-left: 13px; letter-spacing: -.15px; }
.phone { line-height: 20px; padding-left: 23px; letter-spacing: -.15px; }
.preview { margin: 12px 0 0 21px; width: 130px; height: 23px; border: 1px solid #c6c6c6; border-radius: 2px; background: #fff; text-align: center; line-height: 20px; font-size: 12px; letter-spacing: -.22px; }
.size { height: 73px; padding: 6px 1px 0 18px; }
.drop { margin-top: 7px; height: 22px; border-bottom: 1px solid #c6c6c6; font-size: 12px; line-height: 18px; color: #555; display: flex; align-items: center; justify-content: space-between; padding: 0 0 2px 1px; letter-spacing: -.22px; }
.drop i { border: 3.500px solid transparent; border-top: 4px solid #666; border-bottom: 0; }
.sheets { height: 163px; padding: 6px 0 0 18px; }
.sheets ul { margin-top: 12px; padding-left: 1px; height: 109px; overflow: hidden; font-size: 13px; color: #444; letter-spacing: -.15px; }
.sheets li, .objects li { height: 20px; display: flex; align-items: center; }
.sheets li svg { margin-right: 11px; margin-bottom: 1px; }
.ic { fill: none; stroke: #5a5a5a; }
.panes .objects { border: 0; height: 229px; display: flex; overflow: hidden; }
.objmain { width: 180px; padding: 3px 0 0 12px; }
.panes .objmain h3 { font-weight: 500; letter-spacing: -.1px; }
.objmain ul { margin-top: 12px; padding-left: 4px; font-size: 12.500px; color: #222; letter-spacing: -.2px; }
.objmain li svg { margin-right: 7px; }
.objscroll { margin-top: 25px; }

.canvas { width: 650px; height: 593px; background: #fff; display: flex; font-family: "Noto Sans", sans-serif; }
.viz { width: 478px; padding-left: 12px; }
.viz h1 { height: 53px; padding-top: 8px; line-height: 44px; font-size: 18px; font-weight: 500; text-align: center; color: #333; letter-spacing: .1px; }
.bars rect { height: 17px; }
.grid { stroke: #f1f1f1; }
.rule { stroke: #c8c8c8; }
.chart text { font-size: 12px; fill: #808080; letter-spacing: .06px; }
.names text { text-anchor: end; }
.chart .ticks text { text-anchor: middle; letter-spacing: 0; }
.chart text.head { fill: #333; font-weight: 500; letter-spacing: -.1px; }
.legend { width: 160px; padding: 12px 0 0 8px; color: #585858; }
.legend h2 { font-size: 12px; line-height: 18px; height: 19px; color: #333; letter-spacing: .05px; }
.legend li { height: 20px; padding-left: 3px; line-height: 20px; letter-spacing: .08px; display: flex; align-items: center; }
.legend li i { width: 14px; height: 14px; margin-right: 5px; position: relative; top: -1px; }
.c-pink { background: #ff9d9a; } .c-aqua { background: #86bcb6; } .c-blue { background: #4e79a7; } .c-brown { background: #9d7660; }
.c-tan { background: #d7b5a6; } .c-mauve { background: #d4a6c8; } .c-green { background: #59a14f; } .c-gray { background: #79706e; }
.c-lime { background: #8cd17d; } .c-peach { background: #ffbe7d; } .c-olive { background: #b6992d; } .c-orange { background: #f28e2b; } .c-teal { background: #499894; }
.prev { margin-top: 7px; width: 152px; height: 44px; background: #333; color: #fff; font-weight: bold; font-size: 15px; line-height: 44px; padding-left: 3px; letter-spacing: .12px; }
.vscroll { margin-left: auto; }

.tabs { height: 31px; background: #e6e6e6; border-top: 1px solid #c8c8c8; border-bottom: 1px solid #c8c8c8; display: flex; font-family: Inter, Roboto, sans-serif; color: #5c5c5c; letter-spacing: -.16px; }
.tabs span { border-right: 1px solid #c8c8c8; display: flex; align-items: center; flex: none; }
.t-src { width: 131px; padding-left: 10px; }
.tabs .t-src svg { margin: 0 5px 2px 0; }
.t-sh { width: 57px; padding-left: 5px; }
.tabs .t-sh.n { width: 56px; padding-left: 6px; }
.t-da { width: 104px; padding-left: 7px; }
.tabs .t-da.n { width: 102px; }
.t-da svg, .t-st svg { margin: 0 5px 1px 0; }
.tabs .on { background: #fafafa; font-weight: 600; color: #444; letter-spacing: -.12px; }
.t-st { width: 71px; padding-left: 7px; }
.t-new { width: 32px; padding: 3px 0 0 9px; }

.status { height: 20px; background: #eaeaea; display: flex; }
.status i { border-right: 1px solid #c8c8c8; width: 27px; }
.status i:first-child { width: 1000px; }
.status i:nth-child(2) { width: 127px; }
.status .last { width: 1px; }
.status i:nth-child(4) + svg { width: 71px; margin-left: 46px; border-left: 1px solid #c8c8c8; }

.taskbar { height: 40px; display: flex; background: linear-gradient(90deg, #20363e, #213541 55%, #1c2d40 75%, #1a2743); color: #fff; }
.search { width: 288px; height: 40px; background: #f2f2f2; border: 1px solid #aaa; border-width: 1px 0 1px 1px; display: flex; align-items: center; color: #333; font-size: 15px; }
.search span { flex: 1; letter-spacing: -.5px; margin-left: -1px; }
.search + svg { margin-left: -1px; }
.office { font: bold 18px "Liberation Serif", serif; }
.active { width: 48px; margin-left: 1px; background: #4b5a64; border-bottom: 2px solid #76b9ed; overflow: hidden; }
.tray { margin-left: auto; display: flex; align-items: center; width: 382px; }
.temp { width: 54px; padding-left: 4px; font-size: 14px; letter-spacing: -.3px; }
.lang { width: 30px; text-align: center; line-height: 18px; letter-spacing: -.45px; }
.clock { width: 67px; margin-right: auto; padding-left: 3px; text-align: center; line-height: 18px; letter-spacing: -.45px; }

.showme { position: absolute; left: 1158px; top: 48px; width: 204px; filter: drop-shadow(2px 2px 2px rgba(0,0,0,.4)); font-family: Roboto, sans-serif; }
.smtab { margin-left: 93px; height: 37px; width: 111px; background: #fafafa; border: 1px solid #d8d8d8; border-bottom: 0; padding: 0 0 7px 11px; font-size: 14px; letter-spacing: -.2px; display: flex; align-items: center; gap: 6px; color: #333; position: relative; z-index: 1; }
.smbody { margin-top: -1px; height: 556px; background: #fafafa; border: 1px solid #d8d8d8; padding: 14px 13px; }
.thumbs { display: grid; grid-template-columns: repeat(3, 56px); gap: 4px; }
.thumbs svg { width: 56px; height: 42px; background: #fff; box-shadow: inset 0 0 0 1px #ddd; }
.num text { font: 5.500px "Liberation Serif", serif; fill: #d6d6d6; }
.smbody b { display: block; margin: 17px 0 0 2px; font-size: 12px; font-family: Inter, sans-serif; font-weight: 600; letter-spacing: -.2px; }
.watermark { position: absolute; left: 1073px; top: 649px; color: rgba(130,130,130,.5); }
.watermark div { font-size: 19px; line-height: 26px; letter-spacing: .05px; }
.watermark p { font-size: 14px; line-height: 20px; letter-spacing: .2px; }
```
